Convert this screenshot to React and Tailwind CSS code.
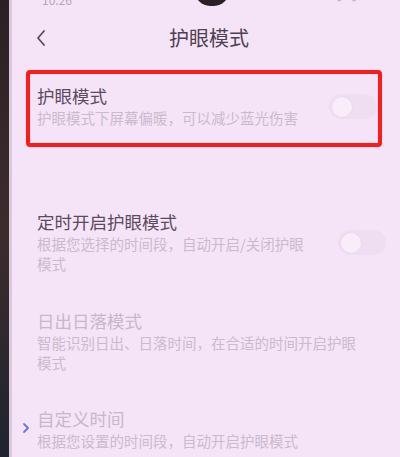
import React from 'react';

const font = { fontFamily: '"Noto Sans CJK SC", "Noto Sans", sans-serif' };

function Toggle() {
  return (
    <div className="w-[48px] h-[25px] rounded-full flex items-center px-[3px] bg-[#efdef2]">
      <div className="w-[20px] h-[20px] rounded-full bg-[#f8edf9] shadow-[0_0_2px_rgba(150,110,160,0.1)]" />
    </div>
  );
}

function Row({ title, desc, toggle, disabled, descWidth, className = '' }) {
  return (
    <div className={`flex items-center justify-between ${className}`}>
      <div className="flex flex-col">
        <div className={`text-[17.5px] leading-[22px] ${disabled ? 'text-[#c8b6cc]' : 'text-[#5b4a5f]'}`}>{title}</div>
        <div className={`text-[14.5px] leading-[20px] text-[#cbb9cf] mt-[1px] ${descWidth}`}>{desc}</div>
      </div>
      {toggle && <Toggle />}
    </div>
  );
}

export default function App() {
  return (
    <div className="w-[400px] h-[457px] overflow-hidden flex bg-[#f5e4f7]" style={font}>
      <div className="w-[9px] h-full bg-gradient-to-b from-[#2b2026] via-[#3d2c2c] to-[#1f2430]" />
      <div className="w-[3px] h-full bg-[#dcc8db]" />
      <div className="flex-1 flex flex-col relative">
        {/* status bar, mostly off the top of the photo */}
        <div className="h-[14px] flex items-start justify-between pl-[30px] pr-[40px] -mt-[9px]">
          <span className="text-[12px] text-[#b5a5b8]">10:26</span>
          <span className="text-[12px] text-[#c5b5c8]">▪ ▪</span>
        </div>
        <div className="absolute left-[183px] -top-[24px] w-[34px] h-[30px] rounded-full bg-[#2a2028]" />
        <div className="h-[48px] flex items-center relative mt-[9px]">
          <svg className="ml-[23px] relative z-10" width="12" height="18" viewBox="0 0 12 18" fill="none">
            <path d="M9 2 L3 9 L9 16" stroke="#5b4a5f" strokeWidth="1.8" strokeLinecap="round" strokeLinejoin="round" />
          </svg>
          <div className="absolute left-0 right-0 text-center text-[20px] text-[#4f3f53] pl-[6px]">护眼模式</div>
        </div>
        <div className="mt-[8px] ml-[14px] mr-[18px] border-[4px] border-[#ff1a1a] rounded-[4px] h-[77px] flex items-start pt-[11px] pl-[7px] pr-[1px]">
          <div className="flex-1 flex items-center justify-between">
            <div className="flex flex-col">
              <div className="text-[17.5px] leading-[22px] text-[#5b4a5f]">护眼模式</div>
              <div className="text-[14.5px] leading-[20px] text-[#cbb9cf] mt-[1px]">护眼模式下屏幕偏暖，可以减少蓝光伤害</div>
            </div>
            <Toggle />
          </div>
        </div>
        <Row
          className="mt-[64px] pl-[25px] pr-[14px]"
          title="定时开启护眼模式"
          desc="根据您选择的时间段，自动开启/关闭护眼模式"
          descWidth="max-w-[274px]"
          toggle
        />
        <Row
          className="mt-[36px] pl-[25px] pr-[14px]"
          title="日出日落模式"
          desc="智能识别日出、日落时间，在合适的时间开启护眼模式"
          descWidth="max-w-[326px]"
          disabled
        />
        <div className="mt-[35px] flex items-start">
          <svg className="ml-[10px] mt-[14px]" width="8" height="12" viewBox="0 0 8 12" fill="none">
            <path d="M2 2 L6 6 L2 10" stroke="#6b6ff0" strokeWidth="1.8" strokeLinecap="round" strokeLinejoin="round" />
          </svg>
          <Row
            className="pl-[7px] pr-[14px]"
            title="自定义时间"
            desc="根据您设置的时间段，自动开启护眼模式"
            disabled
          />
        </div>
      </div>
    </div>
  );
}
